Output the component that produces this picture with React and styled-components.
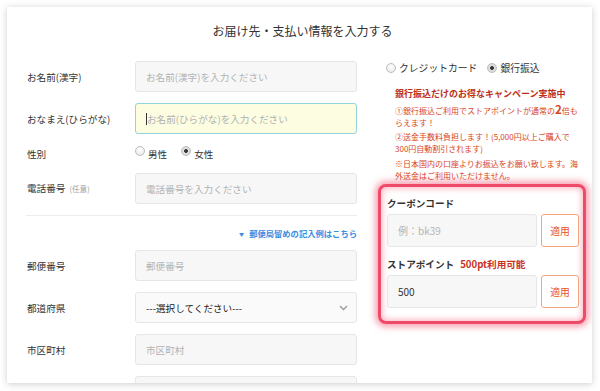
import React from 'react';
import styled, { createGlobalStyle } from 'styled-components';

const Global = createGlobalStyle`
  html, body { margin: 0; padding: 0; background: #fff; }
  body { font-family: "Noto Sans CJK JP", "Noto Sans", sans-serif; color: #333; }
  * { box-sizing: border-box; }
`;

const FONT = `"Noto Sans CJK JP", "Noto Sans", sans-serif`;

const Page = styled.div`
  padding: 7px 8px 8px 7px;
`;

const Card = styled.div`
  width: 585px;
  height: 376px;
  overflow: hidden;
  background: #fff;
  box-shadow: 0 1px 7px rgba(0, 0, 0, 0.2);
`;

const Title = styled.h1`
  margin: 0;
  padding: 15px 0 0 6px;
  font-size: 12px;
  line-height: 18px;
  font-weight: normal;
  text-align: center;
  color: #333;
`;

const Columns = styled.div`
  display: flex;
  gap: 21px;
  margin-top: 21px;
  padding: 0 6px 0 19px;
  align-items: flex-start;
`;

const LeftCol = styled.div`
  width: 331px;
  display: flex;
  flex-direction: column;
  gap: 11px;
`;

const Row = styled.div`
  display: flex;
  align-items: center;
  min-height: ${(p) => p.$h || 31}px;
`;

const Label = styled.div`
  width: 109px;
  flex: none;
  padding-left: 1px;
  font-size: 9.6px;
  line-height: 14px;
  color: #333;
  white-space: nowrap;
`;

const Optional = styled.span`
  font-size: 7.6px;
  color: #a0a0a0;
  margin-left: 4px;
`;

const TextInput = styled.input`
  flex: 1;
  min-width: 0;
  height: ${(p) => p.$h || 31}px;
  padding: 0 10px;
  border: 1px solid #e6e6e6;
  border-radius: 3px;
  background: #f7f7f7;
  font-family: ${FONT};
  font-size: ${(p) => p.$fs || 9.6}px;
  color: #333;
  outline: none;
  &::placeholder { color: #b3b3b3; }
`;

const FocusedInput = styled.div`
  flex: 1;
  height: 31px;
  display: flex;
  align-items: center;
  padding: 0 10px;
  border: 1px solid #92d3de;
  border-radius: 3px;
  background: #fdfde2;
  font-size: 9.6px;
  color: #b0b0b0;
  white-space: nowrap;
`;

const Caret = styled.span`
  width: 1px;
  height: 12px;
  background: #333;
`;

const SelectBox = styled.div`
  flex: 1;
  height: 31px;
  display: flex;
  align-items: center;
  justify-content: space-between;
  padding: 0 8px 0 10px;
  border: 1px solid #e6e6e6;
  border-radius: 3px;
  background: #fafafa;
  font-size: 9.6px;
  color: #222;
`;

const RadioGroup = styled.div`
  display: flex;
  align-items: center;
  gap: ${(p) => p.$gap || 14}px;
`;

const RadioLabel = styled.label`
  display: flex;
  align-items: center;
  gap: 3px;
  font-size: ${(p) => p.$fs || 9.6}px;
  line-height: 14px;
  color: #333;
  white-space: nowrap;
`;

const RadioDot = styled.span`
  width: 10px;
  height: 10px;
  border-radius: 50%;
  flex: none;
  border: 1px solid #bdbdbd;
  background: ${(p) =>
    p.$checked
      ? 'radial-gradient(circle, #3a3a3a 0 1.6px, #e2e2e2 2.2px, #cfcfcf 100%)'
      : 'radial-gradient(circle at 50% 35%, #ffffff 0%, #e4e4e4 100%)'};
  margin-bottom: ${(p) => (p.$raise ? 6 : 0)}px;
`;

const Divider = styled.hr`
  margin: 0;
  border: none;
  height: 1px;
  background: #ececec;
`;

const LinkRow = styled.div`
  display: flex;
  justify-content: flex-end;
  align-items: center;
  height: 12px;
`;

const Link = styled.a`
  display: flex;
  align-items: center;
  gap: 5px;
  font-size: 8.3px;
  font-weight: bold;
  color: #3a8ee4;
  text-decoration: none;
  white-space: nowrap;
`;

const Tri = styled.span`
  font-size: 5px;
  color: #3a8ee4;
`;

const RightCol = styled.div`
  width: 208px;
  display: flex;
  flex-direction: column;
`;

const PayRow = styled.div`
  height: 14px;
  padding-left: 8px;
  display: flex;
  align-items: center;
`;

const Campaign = styled.div`
  padding-left: 17px;
  margin-top: 13px;
`;

const CampaignTitle = styled.div`
  font-size: 9px;
  line-height: 12px;
  font-weight: bold;
  color: #bd2f18;
  white-space: nowrap;
`;

const Note = styled.p`
  margin: ${(p) => p.$mt}px 0 0;
  font-size: 8px;
  line-height: 12px;
  color: #d8441f;
  white-space: nowrap;
`;

const Big = styled.b`
  font-size: 11.5px;
  line-height: 10px;
`;

const GlowBox = styled.div`
  margin-top: 2px;
  border: 3px solid #ef4a68;
  border-radius: 8px;
  padding: 10px 4px 13px 6px;
  box-shadow: 0 0 6px 3px rgba(239, 74, 104, 0.5), inset 0 0 6px 1px rgba(239, 74, 104, 0.45);
  background: #fff;
`;

const BoxLabel = styled.div`
  font-size: 9.6px;
  line-height: 12px;
  font-weight: bold;
  color: #333;
  margin-top: ${(p) => p.$mt || 0}px;
  white-space: nowrap;
`;

const Avail = styled.span`
  color: #c8321c;
  margin-left: 6px;
`;

const ApplyRow = styled.div`
  display: flex;
  gap: 4px;
  margin-top: 5px;
`;

const ApplyButton = styled.button`
  width: 38px;
  height: 33px;
  flex: none;
  border: 1px solid #f3a47f;
  border-radius: 3px;
  background: #fff;
  color: #e8521c;
  font-family: ${FONT};
  font-size: 9.8px;
  padding: 0;
`;

const Chevron = () => (
  <svg width="9" height="6" viewBox="0 0 9 6">
    <polyline points="1,1 4.5,4.5 8,1" fill="none" stroke="#9a9a9a" strokeWidth="1.3" />
  </svg>
);

export default function App() {
  return (
    <>
      <Global />
      <Page>
        <Card>
          <Title>お届け先・支払い情報を入力する</Title>
          <Columns>
            <LeftCol>
              <Row>
                <Label>お名前(漢字)</Label>
                <TextInput placeholder="お名前(漢字)を入力ください" />
              </Row>
              <Row>
                <Label>おなまえ(ひらがな)</Label>
                <FocusedInput>
                  <Caret />
                  お名前(ひらがな)を入力ください
                </FocusedInput>
              </Row>
              <Row $h={17}>
                <Label>性別</Label>
                <RadioGroup $gap={14}>
                  <RadioLabel>
                    <RadioDot $raise />
                    男性
                  </RadioLabel>
                  <RadioLabel>
                    <RadioDot $raise $checked />
                    女性
                  </RadioLabel>
                </RadioGroup>
              </Row>
              <Row>
                <Label>
                  電話番号<Optional>(任意)</Optional>
                </Label>
                <TextInput placeholder="電話番号を入力ください" />
              </Row>
              <Divider />
              <LinkRow>
                <Link href="#">
                  <Tri>▼</Tri>郵便局留めの記入例はこちら
                </Link>
              </LinkRow>
              <Row>
                <Label>郵便番号</Label>
                <TextInput placeholder="郵便番号" />
              </Row>
              <Row>
                <Label>都道府県</Label>
                <SelectBox>
                  ---選択してください---
                  <Chevron />
                </SelectBox>
              </Row>
              <Row>
                <Label>市区町村</Label>
                <TextInput placeholder="市区町村" />
              </Row>
              <Row>
                <Label />
                <TextInput aria-label="番地" />
              </Row>
            </LeftCol>
            <RightCol>
              <PayRow>
                <RadioGroup $gap={10}>
                  <RadioLabel $fs={9.8}>
                    <RadioDot />
                    クレジットカード
                  </RadioLabel>
                  <RadioLabel $fs={9.8}>
                    <RadioDot $checked />
                    銀行振込
                  </RadioLabel>
                </RadioGroup>
              </PayRow>
              <Campaign>
                <CampaignTitle>銀行振込だけのお得なキャンペーン実施中</CampaignTitle>
                <Note $mt={4}>
                  ①銀行振込ご利用でストアポイントが通常の<Big>2</Big>倍も
                  <br />
                  らえます！
                </Note>
                <Note $mt={2}>
                  ②送金手数料負担します！(5,000円以上ご購入で
                  <br />
                  300円自動割引されます)
                </Note>
                <Note $mt={3}>
                  ※日本国内の口座よりお振込をお願い致します。海
                  <br />
                  外送金はご利用いただけません。
                </Note>
              </Campaign>
              <GlowBox>
                <BoxLabel>クーポンコード</BoxLabel>
                <ApplyRow>
                  <TextInput $h={33} $fs={10} placeholder="例：bk39" />
                  <ApplyButton>適用</ApplyButton>
                </ApplyRow>
                <BoxLabel $mt={11}>
                  ストアポイント<Avail>500pt利用可能</Avail>
                </BoxLabel>
                <ApplyRow>
                  <TextInput $h={33} $fs={10} defaultValue="500" />
                  <ApplyButton>適用</ApplyButton>
                </ApplyRow>
              </GlowBox>
            </RightCol>
          </Columns>
        </Card>
      </Page>
    </>
  );
}
